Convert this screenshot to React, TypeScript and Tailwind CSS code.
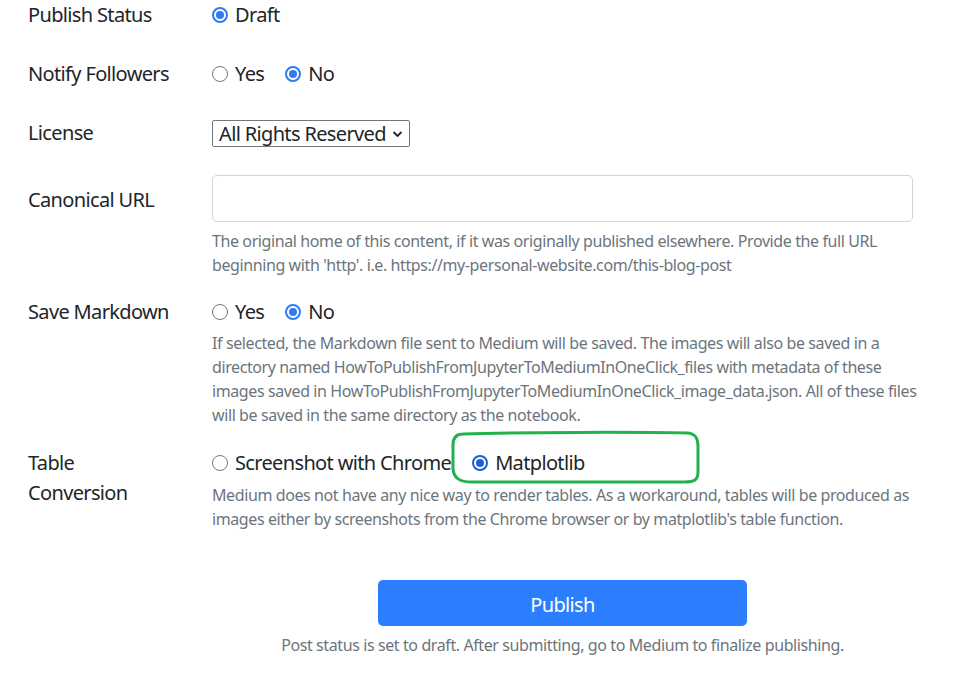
import React from "react";

function Radio({ checked, dark }: { checked?: boolean; dark?: boolean }) {
  if (checked) {
    return (
      <span className={`inline-flex h-[16px] w-[16px] shrink-0 items-center justify-center rounded-full border-2 ${dark ? "border-[#1f5fd6]" : "border-[#2f7bf6]"} bg-white`}>
        <span className={`h-[8px] w-[8px] rounded-full ${dark ? "bg-[#1f5fd6]" : "bg-[#2f7bf6]"}`} />
      </span>
    );
  }
  return <span className="inline-block h-[16px] w-[16px] shrink-0 rounded-full border border-[#767676] bg-white" />;
}

function Option({ label, checked, dark, className = "" }: { label: string; checked?: boolean; dark?: boolean; className?: string }) {
  return (
    <span className={`inline-flex items-center gap-[7px] ${className}`}>
      <Radio checked={checked} dark={dark} />
      <span>{label}</span>
    </span>
  );
}

export default function App() {
  return (
    <div
      className="relative h-[678px] w-[979px] overflow-hidden bg-white text-[20px] leading-[30px] tracking-[-0.65px] text-[#212529]"
      style={{ fontFamily: '"Segoe UI", "Noto Sans", "Open Sans", sans-serif' }}
    >
      <div className="pl-[28px]">
        {/* Publish Status */}
        <div className="flex h-[59px]">
          <div className="w-[184px]">Publish Status</div>
          <div className="flex h-[30px] items-center">
            <Option label="Draft" checked />
          </div>
        </div>
        {/* Notify Followers */}
        <div className="flex h-[59px]">
          <div className="w-[184px]">Notify Followers</div>
          <div className="flex h-[30px] items-center">
            <Option label="Yes" className="mr-[21px]" />
            <Option label="No" checked />
          </div>
        </div>
        {/* License */}
        <div className="flex h-[57px]">
          <div className="w-[184px]">License</div>
          <div className="pt-[2px]">
            <div className="flex h-[27px] w-[198px] items-center justify-between whitespace-nowrap rounded-[2px] border border-[#767676] pl-[6px] pr-[6px] leading-[25px]">
              <span>All Rights Reserved</span>
              <svg width="11" height="8" viewBox="0 0 11 8" className="mt-[1px] shrink-0">
                <path d="M1.5 2 L5.5 6 L9.5 2" fill="none" stroke="#212529" strokeWidth="1.8" />
              </svg>
            </div>
          </div>
        </div>
        {/* Canonical URL */}
        <div className="flex">
          <div className="w-[184px] pt-[10px]">Canonical URL</div>
          <div className="w-[701px]">
            <div className="h-[47px] w-full rounded-[5px] border border-[#ced4da]" />
            <div className="mt-[7px] whitespace-nowrap text-[16px] leading-[24px] tracking-[-0.4px] text-[#6c757d]">
              The original home of this content, if it was originally published elsewhere. Provide the full URL
              <br />
              beginning with 'http'. i.e. https://my-personal-website.com/this-blog-post
            </div>
          </div>
        </div>
        {/* Save Markdown */}
        <div className="mt-[20px] flex">
          <div className="w-[184px]">Save Markdown</div>
          <div className="w-[701px]">
            <div className="flex h-[30px] items-center">
              <Option label="Yes" className="mr-[21px]" />
              <Option label="No" checked />
            </div>
            <div className="mt-[4px] whitespace-nowrap text-[16px] leading-[24px] tracking-[-0.4px] text-[#6c757d]">
              If selected, the Markdown file sent to Medium will be saved. The images will also be saved in a
              <br />
              directory named HowToPublishFromJupyterToMediumInOneClick_files with metadata of these
              <br />
              images saved in HowToPublishFromJupyterToMediumInOneClick_image_data.json. All of these files
              <br />
              will be saved in the same directory as the notebook.
            </div>
          </div>
        </div>
        {/* Table Conversion */}
        <div className="mt-[21px] flex">
          <div className="w-[184px]">
            Table
            <br />
            Conversion
          </div>
          <div className="w-[701px]">
            <div className="flex h-[30px] items-center">
              <Option label="Screenshot with Chrome" className="mr-[21px]" />
              <Option label="Matplotlib" checked dark />
            </div>
            <div className="mt-[5px] whitespace-nowrap text-[16px] leading-[24px] tracking-[-0.4px] text-[#6c757d]">
              Medium does not have any nice way to render tables. As a workaround, tables will be produced as
              <br />
              images either by screenshots from the Chrome browser or by matplotlib's table function.
            </div>
          </div>
        </div>
        {/* Publish */}
        <div className="mt-[49px] flex">
          <div className="w-[184px]" />
          <div className="flex w-[701px] flex-col items-center">
            <button className="h-[46px] w-[369px] rounded-[5px] bg-[#2b7fff] pt-[3px] text-[20px] text-white">Publish</button>
            <div className="mt-[7px] text-[16px] leading-[24px] tracking-[-0.4px] text-[#6c757d]">
              Post status is set to draft. After submitting, go to Medium to finalize publishing.
            </div>
          </div>
        </div>
      </div>

      <svg className="pointer-events-none absolute left-0 top-0" width="979" height="678">
        <path
          d="M463 434 C 520 432, 640 432, 688 433 C 696 434, 698 439, 698 446 L 698 472 C 698 480, 694 482, 685 482 L 472 482 C 459 482, 454 478, 453 469 L 453 445 C 453 438, 456 434, 463 434 Z"
          fill="none"
          stroke="#22b14c"
          strokeWidth="3"
        />
      </svg>
    </div>
  );
}
